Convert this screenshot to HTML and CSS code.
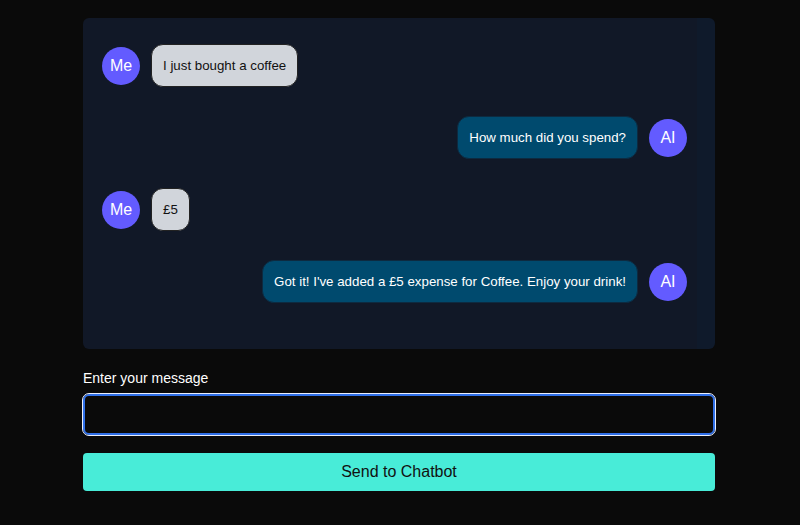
FILE: index.html
```html
<!DOCTYPE html>
<html lang="en">
<head>
<meta charset="utf-8">
<title>Chatbot</title>
<link rel="stylesheet" href="styles.css">
</head>
<body>
<main class="wrap">
  <section class="chat">
    <div class="row me">
      <div class="avatar">Me</div>
      <div class="bubble user">I just bought a coffee</div>
    </div>
    <div class="row ai">
      <div class="bubble bot">How much did you spend?</div>
      <div class="avatar">AI</div>
    </div>
    <div class="row me">
      <div class="avatar">Me</div>
      <div class="bubble user">£5</div>
    </div>
    <div class="row ai">
      <div class="bubble bot">Got it! I've added a £5 expense for Coffee. Enjoy your drink!</div>
      <div class="avatar">AI</div>
    </div>
  </section>
  <form class="composer">
    <label class="label" for="msg">Enter your message</label>
    <input id="msg" class="input" type="text">
    <button type="button" class="send">Send to Chatbot</button>
  </form>
</main>
</body>
</html>
```

FILE: styles.css
```css
* { box-sizing: border-box; }
html, body { margin: 0; padding: 0; }
body {
  background: #0a0a0a;
  font-family: "Liberation Sans", Arial, sans-serif;
  color: #fff;
}
.wrap {
  width: 632px;
  margin: 0 auto;
  padding-top: 18px;
  transform: translateX(-1px);
}
.chat {
  background: #111827;
  border-radius: 6px;
  height: 331px;
  padding: 26px 10px 20px 19px;
  border-right: 18px solid #0f1a2b;
  display: flex;
  flex-direction: column;
  gap: 29px;
}
.row {
  display: flex;
  align-items: center;
  gap: 11px;
}
.row.ai { justify-content: flex-end; }
.avatar {
  width: 38px;
  height: 38px;
  border-radius: 50%;
  background: #635bff;
  color: #fff;
  font-size: 16px;
  display: flex;
  align-items: center;
  justify-content: center;
  flex: none;
}
.bubble {
  font-size: 13.3px;
  line-height: 19px;
  padding: 11px 11px;
  border-radius: 12px;
  border: 1px solid #1f2937;
}
.bubble.user {
  background: #d1d5db;
  color: #111;
  border-color: #222;
}
.bubble.bot {
  background: #004a6e;
  color: #fff;
  border-color: #0d2a40;
}
.composer {
  display: flex;
  flex-direction: column;
  margin-top: 21px;
}
.label {
  font-size: 14px;
  line-height: 16px;
  margin-bottom: 8px;
}
.input {
  height: 41px;
  background: #0a0a0a;
  border: 2px solid #2f6fe8;
  outline: 1px solid #e8eefc;
  outline-offset: 0;
  border-radius: 6px;
  color: #fff;
  font: inherit;
  padding: 0 12px;
}
.send {
  margin-top: 18px;
  height: 38px;
  background: #48ecd8;
  border: none;
  border-radius: 4px;
  color: #111;
  font-family: "Liberation Sans", Arial, sans-serif;
  font-size: 16px;
}
```
